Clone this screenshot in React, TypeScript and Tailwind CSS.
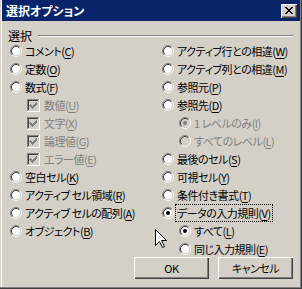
import React from 'react';

type Item = {
  label: string;
  k: string;
  kind?: 'radio' | 'check';
  checked?: boolean;
  disabled?: boolean;
  focus?: boolean;
  indent?: boolean;
};

const leftItems: Item[] = [
  { label: 'コメント', k: 'C' },
  { label: '定数', k: 'O' },
  { label: '数式', k: 'F' },
  { label: '数値', k: 'U', kind: 'check', checked: true, disabled: true, indent: true },
  { label: '文字', k: 'X', kind: 'check', checked: true, disabled: true, indent: true },
  { label: '論理値', k: 'G', kind: 'check', checked: true, disabled: true, indent: true },
  { label: 'エラー値', k: 'E', kind: 'check', checked: true, disabled: true, indent: true },
  { label: '空白セル', k: 'K' },
  { label: 'アクティブ セル領域', k: 'R' },
  { label: 'アクティブ セルの配列', k: 'A' },
  { label: 'オブジェクト', k: 'B' },
];

const rightItems: Item[] = [
  { label: 'アクティブ行との相違', k: 'W' },
  { label: 'アクティブ列との相違', k: 'M' },
  { label: '参照元', k: 'P' },
  { label: '参照先', k: 'D' },
  { label: '1 レベルのみ', k: 'I', checked: true, disabled: true, indent: true },
  { label: 'すべてのレベル', k: 'L', disabled: true, indent: true },
  { label: '最後のセル', k: 'S' },
  { label: '可視セル', k: 'Y' },
  { label: '条件付き書式', k: 'T' },
  { label: 'データの入力規則', k: 'V', checked: true, focus: true },
  { label: 'すべて', k: 'L', checked: true, indent: true },
  { label: '同じ入力規則', k: 'E', indent: true },
];

const Radio = ({ checked, disabled }: { checked?: boolean; disabled?: boolean }) => (
  <svg width="12" height="12" viewBox="0 0 12 12" className="shrink-0">
    <circle cx="6" cy="6" r="4.2" fill={disabled ? '#d4d0c8' : '#fff'} />
    <path d="M2.11 9.89 A5.5 5.5 0 0 1 9.89 2.11" fill="none" stroke="#808080" strokeWidth="1" />
    <path d="M9.89 2.11 A5.5 5.5 0 0 1 2.11 9.89" fill="none" stroke="#fff" strokeWidth="1" />
    <path d="M2.82 9.18 A4.5 4.5 0 0 1 9.18 2.82" fill="none" stroke="#404040" strokeWidth="1" />
    <path d="M9.18 2.82 A4.5 4.5 0 0 1 2.82 9.18" fill="none" stroke="#d4d0c8" strokeWidth="1" />
    {checked && <circle cx="6" cy="6" r="2" fill={disabled ? '#808080' : '#000'} />}
  </svg>
);

const Check = ({ checked, disabled }: { checked?: boolean; disabled?: boolean }) => (
  <svg width="13" height="13" viewBox="0 0 13 13" className="shrink-0" shapeRendering="crispEdges">
    <rect x="0" y="0" width="13" height="13" fill="#fff" />
    <rect x="0" y="0" width="12" height="12" fill="#808080" />
    <rect x="1" y="1" width="11" height="11" fill="#d4d0c8" />
    <rect x="1" y="1" width="10" height="10" fill="#404040" />
    <rect x="2" y="2" width="9" height="9" fill={disabled ? '#d4d0c8' : '#fff'} />
    {checked && (
      <path
        d="M3 5h1v1h1v1h1v-1h1v-1h1v-1h1v-1h1v3h-1v1h-1v1h-1v1h-1v1h-1v-1h-1v-1h-1v-1h-1z"
        fill={disabled ? '#808080' : '#000'}
      />
    )}
  </svg>
);

const Label = ({ item }: { item: Item }) => (
  <span
    className={`whitespace-nowrap px-[1px] ${item.disabled ? 'text-[#808080]' : 'text-black'} ${
      item.focus ? 'outline-1 outline-dotted outline-black' : ''
    }`}
  >
    {item.label}(<span className="underline underline-offset-2">{item.k}</span>)
  </span>
);

const Row = ({ item }: { item: Item }) => (
  <div className={`h-[18px] flex items-center ${item.indent ? 'pl-[17px]' : ''}`}>
    {item.kind === 'check' ? (
      <Check checked={item.checked} disabled={item.disabled} />
    ) : (
      <Radio checked={item.checked} disabled={item.disabled} />
    )}
    <span className={item.kind === 'check' ? 'ml-[3px]' : 'ml-[2px]'}>
      <Label item={item} />
    </span>
  </div>
);

const bevel = 'shadow-[inset_1px_1px_#fff,inset_-1px_-1px_#404040,inset_-2px_-2px_#808080]';

export default function App() {
  return (
    <div
      className="relative w-[302px] h-[289px] bg-[#d4d0c8] flex flex-col px-[2px] pb-[2px] text-[11px] leading-[14px] tracking-[-0.5px] shadow-[inset_-1px_-1px_#404040,inset_-2px_-2px_#808080,inset_1px_0_#d4d0c8,inset_2px_0_#fff] [font-feature-settings:'palt'] overflow-hidden"
      style={{ fontFamily: '"Noto Sans CJK JP", "Noto Sans", sans-serif' }}
    >
      {/* title bar */}
      <div className="h-[21px] bg-[#0a246a] flex items-center justify-between pl-[4px] pr-[3px] shrink-0">
        <span className="text-white font-bold text-[12px] tracking-normal">選択オプション</span>
        <button className={`w-[16px] h-[14px] bg-[#d4d0c8] flex items-center justify-center ${bevel}`}>
          <svg width="8" height="7" viewBox="0 0 8 7" shapeRendering="crispEdges">
            <path d="M0 0h2v1h1v1h2v-1h1v-1h2v1h-1v1h-1v1h-1v1h1v1h1v1h1v1h-2v-1h-1v-1h-2v1h-1v1h-2v-1h1v-1h1v-1h1v-1h-1v-1h-1v-1h-1z" fill="#000" />
          </svg>
        </button>
      </div>

      {/* group header */}
      <div className="flex items-center h-[12px] mt-[9px] shrink-0">
        <span className="ml-[6px] text-black text-[12px] tracking-normal">選択</span>
        <div className="flex-1 ml-[6px] mr-[7px] h-[2px] border-t border-t-[#808080] border-b border-b-white" />
      </div>

      {/* options */}
      <div className="grid grid-cols-[152px_1fr] pl-[8px] shrink-0">
        <div className="flex flex-col">
          {leftItems.map((it, i) => (
            <Row key={i} item={it} />
          ))}
        </div>
        <div className="flex flex-col">
          {rightItems.map((it, i) => (
            <Row key={i} item={it} />
          ))}
        </div>
      </div>

      {/* buttons */}
      <div className="flex justify-end gap-[9px] pr-[7px] -mt-[1px]">
        <button className={`w-[75px] h-[22px] bg-[#d4d0c8] text-black ${bevel}`}>OK</button>
        <button className={`w-[75px] h-[22px] bg-[#d4d0c8] text-black ${bevel}`}>キャンセル</button>
      </div>

      {/* mouse cursor */}
      <svg className="absolute left-[155px] top-[229px]" width="13" height="20" viewBox="0 0 13 20">
        <path
          d="M0.5 0.5 L0.5 16.5 L4.5 12.5 L7.5 18.5 L9.5 17.5 L6.5 11.5 L11.5 11.5 Z"
          fill="#fff"
          stroke="#000"
          strokeWidth="1"
        />
      </svg>
    </div>
  );
}
